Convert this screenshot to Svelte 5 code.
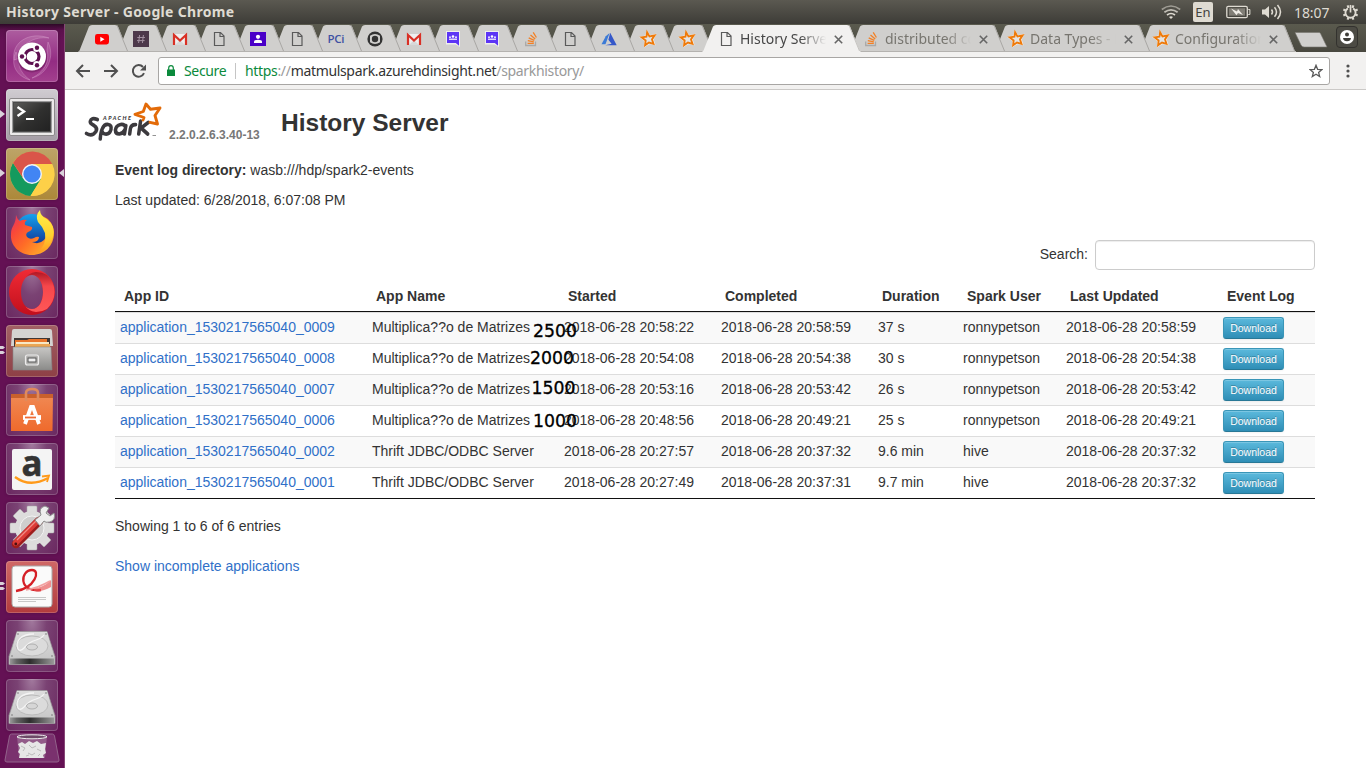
<script>
  const pinned = ['youtube', 'slack', 'gmail', 'page', 'contact', 'page', 'pci', 'cbs', 'gmail', 'people', 'people', 'stack', 'page', 'azure', 'spark', 'spark'];
  const open = [
    { icon: 'page', title: 'History Server', active: true },
    { icon: 'stack', title: 'distributed computing' },
    { icon: 'spark', title: 'Data Types - MLlib' },
    { icon: 'spark', title: 'Configuration' }
  ];
  const launchers = [
    { icon: 'ubuntu' },
    { icon: 'terminal', run: 1 },
    { icon: 'chrome', run: 1, focus: true },
    { icon: 'firefox' },
    { icon: 'opera' },
    { icon: 'files', run: 2 },
    { icon: 'software' },
    { icon: 'amazon' },
    { icon: 'settings' },
    { icon: 'evince', run: 2 },
    { icon: 'disk' },
    { icon: 'disk' }
  ];
  const heads = ['App ID', 'App Name', 'Started', 'Completed', 'Duration', 'Spark User', 'Last Updated', 'Event Log'];
  const mult = 'Multiplica??o de Matrizes';
  const thrift = 'Thrift JDBC/ODBC Server';
  const rows = [
    ['0009', mult, '20:58:22', '20:58:59', '37 s', 'ronnypetson', '20:58:59'],
    ['0008', mult, '20:54:08', '20:54:38', '30 s', 'ronnypetson', '20:54:38'],
    ['0007', mult, '20:53:16', '20:53:42', '26 s', 'ronnypetson', '20:53:42'],
    ['0006', mult, '20:48:56', '20:49:21', '25 s', 'ronnypetson', '20:49:21'],
    ['0002', thrift, '20:27:57', '20:37:32', '9.6 min', 'hive', '20:37:32'],
    ['0001', thrift, '20:27:49', '20:37:31', '9.7 min', 'hive', '20:37:32']
  ];
  const notes = [
    { text: '2500', x: 533, y: 321 },
    { text: '2000', x: 530, y: 348 },
    { text: '1500', x: 531.5, y: 378 },
    { text: '1000', x: 533, y: 411 }
  ];
  const teeth = [0, 45, 90, 135, 180, 225, 270, 315];
</script>

{#snippet favicon(name)}
  <svg class="fav" width="16" height="16" viewBox="0 0 16 16">
    {#if name === 'youtube'}
      <rect x="1" y="3" width="14" height="10.5" rx="2.4" fill="#f00" /><path d="M6.3 5.8v5l4.2-2.5z" fill="#fff" />
    {:else if name === 'slack'}
      <rect width="16" height="16" fill="#4d394b" /><path d="M6.6 4 5.6 12M10.4 4l-1 8M4.3 6.5h7.6M4 9.6h7.6" stroke="#a391a1" stroke-width="1" fill="none" />
    {:else if name === 'gmail'}
      <path d="M1 3h14v11H1z" fill="#eee" /><path d="M3 14 8 9l5 5z" fill="#d8d8d8" /><path d="M2 14V4l6 5.5L14 4v10" fill="none" stroke="#d93025" stroke-width="2.2" />
    {:else if name === 'page'}
      <path d="M3.5 1.5h6l3.5 3.6v9.4H3.5zM9 1.5v4h4" fill="none" stroke="#5a5a5a" stroke-width="1.2" />
    {:else if name === 'contact'}
      <rect y="1" width="16" height="14" fill="#4a00c8" /><circle cx="8" cy="5.8" r="2.1" fill="#fff" /><path d="M4 12v-1.400q0-1.800 4-1.800t4 1.800V12z" fill="#fff" />
    {:else if name === 'pci'}
      <text x="-.6" y="12.4" font-family="Open Sans, sans-serif" font-size="11.5" font-weight="600" fill="#3f51a3" textLength="17">PCi</text>
    {:else if name === 'cbs'}
      <circle cx="8" cy="8" r="7.600" fill="#333" /><path d="M3 4.800Q5.500 3 8 3t5 1.800v6.400Q10.500 13 8 13t-5-1.800z" fill="#d0cfcd" /><circle cx="8" cy="8" r="3.200" fill="#333" />
    {:else if name === 'people'}
      <path d="M1 0h14v16l-4.500-2.500H1z" fill="#eee" /><path d="M2 1h12v13.700L10.800 12H2z" fill="#5c35f5" /><path d="M4 8.800V7.600h8v1.200z" fill="#fff" /><circle cx="8" cy="5.500" r="1.300" fill="#fff" /><circle cx="5" cy="6.200" r=".9" fill="#fff" /><circle cx="11" cy="6.200" r=".9" fill="#fff" />
    {:else if name === 'stack'}
      <path d="M2.700 10.500v4h9.800v-4" fill="none" stroke="#aaa9a8" stroke-width="1.300" /><path d="M4.600 12.400h6.200M4.800 9.700l6 1.200M5.700 6.800l5.600 2.600M7.500 3.900l4.700 4M10.200 1.400l3.200 5.100" stroke="#f48024" stroke-width="1.300" fill="none" />
    {:else if name === 'azure'}
      <path d="M8.600 2 4.800 5.300.500 13.300h4z" fill="#3c7bd6" /><path d="m9.200 1.800 6.500 12.400H4.200l6.400-1.400-3.200-4z" fill="#3558c9" />
    {:else}
      <path d="m7.100.9 2.800 4 5.300-1.200-2.300 4.700 1.500 5-4.900-1.200-4.800 2.900.3-5.300L.8 6.300l5-1z" fill="#fff" stroke="#fff" stroke-width="1.400" /><path d="m7.100 1.300 2.400 4.100 5.100-1.100-2.600 4.100 1.500 4.400-4.500-1.300-3.900 2.800.5-4.900-3.900-3 4.700-.7z" fill="#e4e4e4" stroke="#ee7a0a" stroke-width="1.900" />
    {/if}
  </svg>
{/snippet}

{#snippet tab(icon, title, active, z)}
  {@const w = title ? (active ? 159 : 157) : 51}
  <div class="tab" class:active class:pinned={!title} style="width:{w}px;z-index:{z}">
    <svg class="shape" width={w} height="28" viewBox="0 0 {w} 28">
      <path d="M0 28 L1.5 26.5 11 2.5Q12 1 14 1H{w - 14}Q{w - 12} 1 {w - 11} 2.5L{w - 1.5} 26.5 {w} 28z" fill={active ? '#f2f1f0' : '#d0cfcd'} />
      <path d="M{w - 12} 1.2L{w - 1.5} 27" stroke={active ? '#c6c4c1' : '#a9a7a4'} fill="none" />
      {#if !active}<path d="M1 27.5H{w}" stroke="#b4b2af" />{/if}
    </svg>
    {@render favicon(icon)}
    {#if title}
      <span class="tabtitle">{title}</span>
      <svg class="close" width="9" height="9" viewBox="0 0 9 9"><path d="m.8.8 7.400 7.400m0-7.400L.8 8.200" stroke="#666" stroke-width="1.600" /></svg>
    {/if}
  </div>
{/snippet}

{#snippet appicon(name)}
  <svg width="52" height="52" viewBox="0 0 52 52">
    {#if name === 'ubuntu'}
      <g fill="#f0c8e8" fill-opacity=".16" stroke="#e3b4da" stroke-opacity=".4" stroke-width=".8"><path d="M8 30C5 12 24 1 43 8 28 6 14 14 14 28z" /><path d="M42 12c7 14 0 32-16 36 12-6 18-16 15-28z" /><path d="M10 22C4 34 10 46 24 50 16 44 12 38 13 28z" /></g>
      <circle cx="26" cy="27.500" r="15" fill="#4a0a3c" opacity=".3" /><circle cx="26" cy="26.500" r="14" fill="#fff" />
      <circle cx="26" cy="26.500" r="7" fill="none" stroke="#5e1050" stroke-width="3.200" /><g fill="#fff"><circle cx="17" cy="26.500" r="3.200" /><circle cx="30.500" cy="18.700" r="3.200" /><circle cx="30.500" cy="34.300" r="3.200" /></g><g fill="#5e1050"><circle cx="16" cy="26.500" r="2.200" /><circle cx="31" cy="17.700" r="2.200" /><circle cx="31" cy="35.300" r="2.200" /></g>
    {:else if name === 'terminal'}
      <rect x="3.500" y="9.500" width="45" height="37" rx="1.500" fill="#eceaea" stroke="#8c898b" /><rect x="6.500" y="12.500" width="39" height="31" fill="#4a4a4a" stroke="#999" /><rect x="8" y="14" width="36" height="28" fill="url(#term)" /><path d="m11.500 18 6.500 4.500-6.500 4.500" fill="none" stroke="#fff" stroke-width="2.400" /><path d="M20 30h8" stroke="#fff" stroke-width="2" />
    {:else if name === 'chrome'}
      <circle cx="26" cy="26" r="22" fill="#fdd048" /><path d="M7 15a22 22 0 0 0 17.500 33L35 31 26 26 17 30z" fill="#149a5e" /><path d="M26 16h20.200A22 22 0 0 1 24.500 48L35 31z" fill="#fdd048" /><path d="M7 15 17 30l9-14h20.200A22 22 0 0 0 7 15z" fill="#da5549" /><circle cx="26" cy="26" r="10" fill="#f1f3f8" /><circle cx="26" cy="26" r="8.600" fill="#4285f4" />
    {:else if name === 'firefox'}
      <circle cx="26" cy="24" r="17" fill="url(#fxblue)" />
      <path d="M10 8q1 4 4 6 3-2 7-1-3 2-2 5 3 1 7 2 1 3-4 5-3 2-1 5 3 3 7 1 3-2 5-1 0 5-7 5 7 3 12-2c6-7 6-17-1-24l5 3c4 4 6 9 6 14C48 39 38 48 26 48 13 48 4 38 5 27c0-8 5-9 5-19z" fill="url(#fxfire)" />
      <path d="M34 3q0 6 7 9 9 7 6 18-3 13-16 16 10-8 8-20-2-6-7-11-3-7 2-12z" fill="url(#fxyel)" />
    {:else if name === 'opera'}
      <path fill="url(#opera)" fill-rule="evenodd" d="M26 3a23 23 0 1 1 0 46 23 23 0 1 1 0-46zm0 6c-7 0-11 8-11 17s4 17 11 17 11-8 11-17S33 9 26 9z" /><path d="M18.500 13Q22 7 30 6q6 0 11 3a23 23 0 0 1 0 34q-5 3-11 3-8-1-11.500-7Q21 43 26 43c7 0 11-8 11-17S33 9 26 9q-5 0-7.500 4z" fill="url(#operalit)" />
    {:else if name === 'files'}
      <path d="M6 6q0-2 2-2h36q2 0 2 2l1 15H5z" fill="#d4d3d1" /><path d="M8 13h36v15H8z" fill="#3f3735" /><path d="M9 15h12l2-1h18v12H9z" fill="#e8752b" /><path d="M10 17h33v8H10z" fill="#f7e8c6" /><path d="M9 19h35v4H9z" fill="#eaa654" /><path d="M7 22h38l1 23H7z" fill="url(#metal)" stroke="#888" stroke-width=".6" /><rect x="19.500" y="30" width="13" height="10" rx="2" fill="#b5b4b2" stroke="#ecebeb" stroke-width="1.200" /><rect x="22" y="33" width="8" height="4" fill="#eee" stroke="#555" />
    {:else if name === 'software'}
      <path d="M5 10h42l-.500 37H5z" fill="url(#bag)" /><path d="M5 10h42v4H5z" fill="#c9602c" /><path d="M20 17V9q0-4 6-4t6 4v8" fill="none" stroke="#e08a5c" stroke-width="2.600" /><path d="M19 40 25 23h2l6 17" fill="none" stroke="#fff" stroke-width="3.800" /><path d="M17 33.500h18" stroke="#fff" stroke-width="4.800" /><path d="M19 33.500h11" stroke="#ef6b33" stroke-width="1.800" />
    {:else if name === 'amazon'}
      <rect x="6" y="6" width="40" height="41" rx="2" fill="#f4f4f4" /><text x="15.500" y="33" font-family="Open Sans, sans-serif" font-weight="700" font-size="35" fill="#333" textLength="21" lengthAdjust="spacingAndGlyphs" stroke="#333" stroke-width=".6">a</text><path d="M9 34q15 11 33 1" fill="none" stroke="#ff9a1a" stroke-width="2.400" /><path d="m36 33.500 7-1-2 6.500" fill="none" stroke="#ff9a1a" stroke-width="1.800" />
    {:else if name === 'settings'}
      {#each teeth as a}<rect x="21" y="4" width="10" height="12" rx="1" fill="#dedddd" stroke="#aaa" stroke-width=".500" transform="rotate({a} 26 26)" />{/each}
      <circle cx="26" cy="26" r="17" fill="#dddcdc" /><circle cx="26" cy="26" r="12" fill="#cfcece" stroke="#f3f3f3" /><path d="M10 42 33 19" stroke="#9d1d1d" stroke-width="8.500" stroke-linecap="round" /><path d="M9.500 41 32 18.500" stroke="#dc3b36" stroke-width="5.500" stroke-linecap="round" /><path d="m11 38 19-19" stroke="#f08a84" stroke-width="1.200" /><circle cx="9.800" cy="42" r="1.400" fill="#471010" /><path d="m29 18 6-5q-3-7 4-9l4 2-3 5 4 3 4-3q2 7-4 9-5 1-6-1l-4 5z" fill="#eee" stroke="#8c8c8c" />
    {:else if name === 'evince'}
      <rect x="6" y="5" width="40" height="41" rx="3" fill="#fafafa" stroke="#aaa" /><path d="M12 36.500h28M12 38.500h28M12 40.500h18" stroke="#c8c8c8" /><path d="M10 30C29 27 35 9 26 9c-12 0-14 23 9 20" fill="none" stroke="#d51f26" stroke-width="2.300" /><path d="M28 27q9 0 17-8v7q-8 5-17 4z" fill="#e85455" opacity=".65" /><path d="M20 29q12-2 24-9" stroke="#f2a0a0" stroke-width="1.500" fill="none" />
    {:else}
      <path d="m11 11.500 30 0 8 25v8H3v-8z" fill="#c9c9c9" stroke="#989898" stroke-width=".7" /><path d="m11 12 30 0 7 26H4z" fill="url(#disk)" /><path d="M4 38.500h44V44H4z" fill="url(#diskfront)" /><ellipse cx="26" cy="26" rx="16" ry="10" fill="#dbdbdb" stroke="#bbb" /><path d="M28 14C14 14 9 22 12 29q2 3 6-1 5-6 12-8 6-2 8-5" fill="none" stroke="#f4f4f4" stroke-width="1.300" /><ellipse cx="26" cy="27" rx="5.500" ry="3" fill="#d6d6d6" stroke="#a5a5a5" stroke-width=".8" /><g fill="#777"><circle cx="12" cy="14" r=".8" /><circle cx="40" cy="14" r=".8" /><circle cx="6" cy="36" r=".8" /><circle cx="46" cy="36" r=".8" /></g>
    {/if}
  </svg>
{/snippet}

<svg class="defs" width="0" height="0">
  <defs>
    <linearGradient id="term" x2="1" y2="1"><stop stop-color="#5a5a58" /><stop offset=".5" stop-color="#30302f" /><stop offset="1" stop-color="#222" /></linearGradient>
    <linearGradient id="fxblue" x2="0" y2="1"><stop stop-color="#15a1ee" /><stop offset="1" stop-color="#102a8c" /></linearGradient>
    <linearGradient id="fxfire" x1="0" y1="0" x2="1" y2=".8"><stop stop-color="#e2336a" /><stop offset=".25" stop-color="#f9483a" /><stop offset=".55" stop-color="#ff6d26" /><stop offset="1" stop-color="#ffb52c" /></linearGradient>
    <linearGradient id="fxyel" x2="0" y2="1"><stop stop-color="#fff14a" /><stop offset=".6" stop-color="#ffd030" /><stop offset="1" stop-color="#ff9820" /></linearGradient>
    <linearGradient id="opera" x2="0" y2="1"><stop stop-color="#f02b35" /><stop offset="1" stop-color="#c10f1d" /></linearGradient>
    <linearGradient id="operalit" x2="0" y2="1"><stop stop-color="#b01826" /><stop offset=".35" stop-color="#f5474b" /><stop offset="1" stop-color="#ff5757" /></linearGradient>
    <linearGradient id="metal" x2="0" y2="1"><stop stop-color="#c8c7c5" /><stop offset="1" stop-color="#8b8b89" /></linearGradient>
    <linearGradient id="bag" x2="0" y2="1"><stop stop-color="#f08a55" /><stop offset="1" stop-color="#ef6a2c" /></linearGradient>
    <linearGradient id="disk" x2="0" y2="1"><stop stop-color="#ddd" /><stop offset="1" stop-color="#c9c9c9" /></linearGradient>
    <linearGradient id="diskfront"><stop stop-color="#999" /><stop offset=".15" stop-color="#666" /><stop offset=".45" stop-color="#2d2d2d" /><stop offset="1" stop-color="#999" /></linearGradient>
  </defs>
</svg>

<div class="screen">
  <header class="panel">
    <span class="wintitle">History Server - Google Chrome</span>
    <div class="tray">
      <svg width="20" height="14" viewBox="0 0 20 14"><g fill="none" stroke="#dfdbd2" stroke-width="1.700"><path d="M.8 4.500q9.200-7 18.400 0" opacity=".55" /><path d="M3.400 7.300q6.600-5 13.200 0" opacity=".8" /><path d="M6 10q4-3 8 0" /></g><path d="M8 12q2-1.500 4 0l-2 2z" fill="#dfdbd2" /></svg>
      <span class="lang">En</span>
      <svg class="bat" width="25" height="14" viewBox="0 0 25 14"><rect x=".8" y="1.300" width="20.500" height="11.400" rx="1.500" fill="none" stroke="#dfdbd2" stroke-width="1.300" /><rect x="3" y="3.300" width="16" height="7.400" fill="#817e76" /><path d="M22.300 4.500h1.600v5h-1.600" fill="none" stroke="#dfdbd2" /><path d="m5 3.500 6 3 1-2.500 5 6-5-2-1.500 2.300z" fill="#efece6" /></svg>
      <svg class="vol" width="20" height="16" viewBox="0 0 20 16"><path d="M0 5.500h3L7 2v12l-4-3.500H0z" fill="#dfdbd2" /><g fill="none" stroke="#dfdbd2" stroke-width="1.500"><path d="M9.500 5.500q2 2.500 0 5" /><path d="M12.500 3.200q4 4.800 0 9.600" /><path d="M15.500 1q6 7 0 14" /></g></svg>
      <span class="clock">18:07</span>
      <svg width="17" height="17" viewBox="0 0 18 18">{#each teeth as a}<path d="M9 .8v3" stroke="#dfdbd2" stroke-width="2.200" transform="rotate({a + 22.5} 9 9)" />{/each}<path d="M6.200 4.600a5.400 5.400 0 1 0 5.600 0" fill="none" stroke="#dfdbd2" stroke-width="2" /><path d="M9 1v8" stroke="#dfdbd2" stroke-width="1.800" /></svg>
    </div>
  </header>

  <div class="below">
    <aside class="launcher">
      {#each launchers as l}
        <div class="tile {l.icon}">
          {@render appicon(l.icon)}
          {#if l.run === 1}<svg class="pip" width="5" height="8" viewBox="0 0 5 8"><path d="M0 0v8l5-4z" fill="#d9d2da" /></svg>{/if}
          {#if l.run === 2}<svg class="pip" width="5" height="8" viewBox="0 0 5 8"><path d="M0 0h3l2 1.500L3 3H0zM0 5h3l2 1.500L3 8H0z" fill="#d9d2da" /></svg>{/if}
          {#if l.focus}<svg class="focus" width="5" height="8" viewBox="0 0 5 8"><path d="M5 0v8L0 4z" fill="#d9d2da" /></svg>{/if}
        </div>
      {/each}
      <svg class="trash" width="56" height="30" viewBox="0 0 56 30"><path d="M7.500 1h41Q50 1 50.500 3L55 27q.300 2-2 2H3q-2.300 0-2-2L5.500 3Q6 1 7.500 1z" fill="#8f5288" fill-opacity=".5" stroke="#92628b" /><path d="M13 3h30l-2 22H15z" fill="#ddd" opacity=".25" /><path d="m14 11 4-2 3 2 4-3 4 2 4-2 4 3 5-1-1 6 1 4-3 2 1 3H15l1-4-2-2 2-4z" fill="#e6e6e6" /><path d="m17 13 4 2-2 3m6-6 3 3 4-2m-8 7 4 2 3-2m2-4 4 2m-15 5 3-1m9 1 2-2" fill="none" stroke="#b5b5b5" stroke-width=".900" /><ellipse cx="28" cy="3.800" rx="15" ry="2" fill="#6d4a68" stroke="#eee" /></svg>
    </aside>

    <main class="browser">
      <div class="tabs">
        {#each pinned as p, i}{@render tab(p, '', false, 30 - i)}{/each}
        {#each open as t, i}{@render tab(t.icon, t.title, !!t.active, t.active ? 40 : 14 - i)}{/each}
        <svg class="newtab" width="34" height="16" viewBox="0 0 34 16"><path d="M1 .500h24q1 0 1.500 1L33 15H10q-2 0-3-2z" fill="#d0cfcd" stroke="#77766e" stroke-width=".600" /></svg>
        <div class="profile"><svg width="14" height="14" viewBox="0 0 14 14"><circle cx="7" cy="7" r="7" fill="#fff" /><circle cx="7" cy="4.500" r="2" fill="#3e3d38" /><path d="M3 8h8q-.5 3.300-4 3.300T3 8z" fill="#3e3d38" /></svg></div>
      </div>

      <div class="toolbar">
        <svg width="72" height="16" viewBox="0 0 72 16" fill="none" stroke="#505050" stroke-width="2"><path d="M15 8H2M8 2 2 8l6 6M29 8h13M36 2l6 6-6 6" /><path d="M69 10.200A5.800 5.800 0 1 1 68 4" /><path d="M71 1.500v6h-6z" fill="#505050" stroke="none" /></svg>
        <div class="omnibox">
          <svg width="8" height="12" viewBox="0 0 8 12"><path d="M0 4.500h8V11H0z" fill="#0b8a3c" /><path d="M1.700 5V3a2.300 2.300 0 0 1 4.600 0v2" fill="none" stroke="#0b8a3c" stroke-width="1.200" /></svg>
          <span class="secure">Secure</span>
          <span class="url"><span class="ok">https</span><span class="dim">://</span><span class="host">matmulspark.azurehdinsight.net</span><span class="dim path">/sparkhistory/</span></span>
          <svg class="star" width="14" height="14" viewBox="0 0 14 14"><path d="m7 1.300 1.600 4 4.300.3-3.300 2.800 1.100 4.200L7 10.300l-3.700 2.300 1.100-4.200L1.100 5.600l4.300-.3z" fill="none" stroke="#5a5a5a" stroke-width="1.300" /></svg>
        </div>
        <svg class="menu" width="4" height="14" viewBox="0 0 4 14" fill="#505050"><circle cx="2" cy="2" r="1.600" /><circle cx="2" cy="7" r="1.600" /><circle cx="2" cy="12" r="1.600" /></svg>
      </div>

      <div class="page">
        <div class="brand">
          <svg width="77" height="40" viewBox="0 0 77 40" overflow="visible">
            <g transform="translate(.5 0) scale(.95 1)" fill="none" stroke="#3c3a3e" stroke-width="3.700" stroke-linecap="round"><path d="M12.500 17.500Q6 15 5 19.500q-.300 2 4 4 4 2.500 2 6-4 5.500-10 2" /><path d="M15.500 37q.500-7 2.300-10.500 2-4.500 6-4 4 .500 3 5-1.500 5-6 4.500-2.500-.500-3-2" /><path d="M42.500 23.500 41 32M42 25q-1-3-5-2.500-5 1-5.500 5.500 0 4 4 4 4-.500 5.700-4" /><path d="m46.500 32 .700-5q.800-4.500 5.500-4.300" /><path d="m56 32 2-13M66 20.500l-7.500 5.500 7 6" /></g>
            <path d="M58 18 59 15.500 50 12.300 58.300 9.500 61 2 65.500 7.300 75 6 70 13.500 72.500 22 65 20.300" fill="none" stroke="#e36b09" stroke-width="2.900" stroke-linejoin="round" stroke-linecap="round" />
            <text x="18" y="17.500" font-family="Lato, sans-serif" font-size="5.600" font-weight="900" font-style="italic" fill="#3c3a3e" textLength="28">APACHE</text><path d="M67.500 33.500H71" stroke="#777" stroke-width=".800" />
          </svg>
          <span class="version">2.2.0.2.6.3.40-13</span>
          <h1>History Server</h1>
        </div>

        <section class="content">
          <p><b>Event log directory:</b> wasb:///hdp/spark2-events</p>
          <p>Last updated: 6/28/2018, 6:07:08 PM</p>
          <div class="search"><label for="q">Search:</label><input id="q" type="text" /></div>
          <div class="table">
            <div class="row head">{#each heads as h}<span>{h}</span>{/each}</div>
            {#each rows as r, i}
              <div class="row" class:odd={i % 2 === 0}>
                <a href="#app">application_1530217565040_{r[0]}</a>
                <span>{r[1]}</span>
                <span>2018-06-28 {r[2]}</span>
                <span>2018-06-28 {r[3]}</span>
                <span>{r[4]}</span>
                <span>{r[5]}</span>
                <span>2018-06-28 {r[6]}</span>
                <span><button>Download</button></span>
              </div>
            {/each}
          </div>
          <p class="info">Showing 1 to 6 of 6 entries</p>
          <a class="more" href="#app">Show incomplete applications</a>
        </section>
      </div>
    </main>
  </div>

  {#each notes as n}<span class="note" style="left:{n.x}px;top:{n.y}px">{n.text}</span>{/each}
</div>

<style>
  :global(body) { margin: 0; overflow: hidden; }
  .defs { position: absolute; }
  .screen { position: relative; width: 1366px; height: 768px; overflow: hidden; display: flex; flex-direction: column; background: #fff; font-family: "Liberation Sans", Arial, sans-serif; font-size: 14px; color: #333; }
  svg { display: block; flex: none; }
  .panel { height: 24px; flex: none; display: flex; align-items: center; justify-content: space-between; box-sizing: border-box; padding: 0 7px 0 6px; background: linear-gradient(#5b5951, #3d3c37); color: #dfdbd2; font-family: "Noto Sans", sans-serif; }
  .wintitle { font-size: 14px; line-height: 20px; font-weight: 700; white-space: nowrap; letter-spacing: .32px; }
  .tray { display: flex; align-items: center; }
  .lang { width: 20px; height: 20px; margin-left: 12px; border-radius: 2px; background: #dfdbd2; color: #45433e; font-size: 13px; line-height: 21px; text-align: center; }
  .bat { margin-left: 13px; }
  .vol { margin-left: 11px; }
  .clock { width: 36px; margin: 0 12px 0 12px; font-size: 14px; letter-spacing: -.1px; }
  .below { flex: 1; display: flex; min-height: 0; }

  .launcher { width: 65px; box-sizing: border-box; flex: none; padding: 6px 0 0 6px; display: flex; flex-direction: column; gap: 7px; background: linear-gradient(#2e0927, #5b104c 6px, #641154 16px, #641154); border-right: 1px solid #864676; }
  .tile { position: relative; width: 52px; height: 52px; flex: none; border-radius: 4px; background: radial-gradient(ellipse at 50% 0, #a27a9e 0, #7a4273 40%, #6a2860 100%); box-shadow: inset 0 0 0 1px #ffffff30, 0 0 3px #2c062555; }
  .ubuntu { background: linear-gradient(#ad5d9f, #932c83 60%, #a3408e); }
  .terminal { background: linear-gradient(#d0ccd1, #a49da5); }
  .chrome { background: linear-gradient(#bda468, #ac8839); }
  .files { background: linear-gradient(#a26065, #8e4046); }
  .evince { background: linear-gradient(#cf6866, #b23b3d); }
  .pip { position: absolute; left: -6px; top: 21px; }
  .focus { position: absolute; right: -6px; top: 21px; }
  .trash { margin: -5px 0 0 -2px; }

  .browser { flex: 1; min-width: 0; display: flex; flex-direction: column; }
  .tabs { height: 28px; flex: none; display: flex; padding-left: 13px; background: linear-gradient(#5a5a4e, #494840); }
  .tab { position: relative; height: 28px; flex: none; box-sizing: border-box; display: flex; align-items: center; padding: 2px 0 0 14px; margin-right: -12px; }
  .tab.pinned, .tab.active { padding-left: 16px; }
  .shape { position: absolute; left: 0; top: 0; }
  .fav { position: relative; overflow: visible; }
  .tabtitle { position: relative; width: 87px; margin-left: 6px; overflow: hidden; white-space: nowrap; font-family: "Noto Sans", sans-serif; font-size: 14px; line-height: 20px; color: #77756f; mask-image: linear-gradient(90deg, #000 60px, transparent 86px); }
  .active .tabtitle { color: #474747; }
  .close { position: relative; margin-left: 7px; }
  .newtab { margin: 8px 0 0 10px; }
  .profile { width: 20px; height: 20px; margin: 2px 0 0 8px; display: flex; align-items: center; justify-content: center; border: 1px solid #33322e; border-radius: 4px; background: #4c4b44; }
  .toolbar { height: 38px; flex: none; box-sizing: border-box; display: flex; align-items: center; padding: 0 15px 0 10px; background: #f2f1f0; border-bottom: 1px solid #cbc9c7; }
  .omnibox { width: 1172px; height: 28px; margin-left: 11px; flex: none; box-sizing: border-box; display: flex; align-items: center; padding: 0 6px 0 8px; background: #fff; border: 1px solid #a8a6a4; border-radius: 3px; font-family: "Noto Sans", sans-serif; font-size: 14px; white-space: nowrap; }
  .secure { width: 43px; margin-left: 9px; padding-right: 8px; border-right: 1px solid #c5c5c5; color: #0b8a3c; line-height: 16px; letter-spacing: -.35px; }
  .url { margin-left: 9px; line-height: 20px; color: #333; letter-spacing: -.33px; }
  .ok { color: #0b8a3c; }
  .dim { color: #999; }
  .star { margin-left: auto; }
  .menu { margin-left: 16px; }

  .page { flex: 1; background: #fff; }
  .brand { display: flex; height: 40px; padding: 12px 0 0 20px; }
  .version { margin: 25px 0 0 7px; width: 91px; font-size: 12px; line-height: 16px; font-weight: 700; color: #777; white-space: nowrap; }
  h1 { margin: 6px 0 0 21px; font-size: 24.5px; line-height: 30px; }
  .content { padding: 18px 51px 0 50px; }
  p { margin: 0 0 10px; line-height: 20px; }
  .search { display: flex; justify-content: flex-end; margin-top: 30px; line-height: 28px; }
  input { width: 220px; height: 30px; box-sizing: border-box; margin-left: 7px; border: 1px solid #ccc; border-radius: 4px; box-shadow: inset 0 1px 1px #00000013; }
  .table { margin-top: 11px; border-bottom: 1px solid #111; }
  .row { display: grid; grid-template-columns: 252px 192px 157px 157px 85px 103px 157px 97px; height: 31px; box-sizing: border-box; border-top: 1px solid #ddd; line-height: 20px; padding-top: 4px; white-space: nowrap; }
  .row > * { padding-left: 5px; }
  .row.odd { background: #f9f9f9; }
  .row.head { border: 0; border-bottom: 1px solid #111; font-weight: 700; padding-top: 5px; }
  .row.head > * { padding-left: 9px; }
  a { color: #3070c8; text-decoration: none; }
  button { display: block; width: 61px; height: 22px; box-sizing: border-box; padding: 0; border: 1px solid #2f96b4; border-color: #3a96b8 #3a96b8 #287896; border-radius: 3px; background: linear-gradient(#5bb9dc, #2f8eb6); box-shadow: inset 0 1px 0 #ffffff33, 0 1px 2px #0000000d; color: #fff; font: 10.5px/20px "Liberation Sans", Arial, sans-serif; text-shadow: 0 -1px 0 #00000040; }
  .info { margin: 17px 0 20px; }
  .more { line-height: 20px; }
  .note { position: absolute; font-family: "DejaVu Sans", sans-serif; font-size: 17.3px; line-height: 20px; color: #000; -webkit-text-stroke: .3px #000; }
</style>
